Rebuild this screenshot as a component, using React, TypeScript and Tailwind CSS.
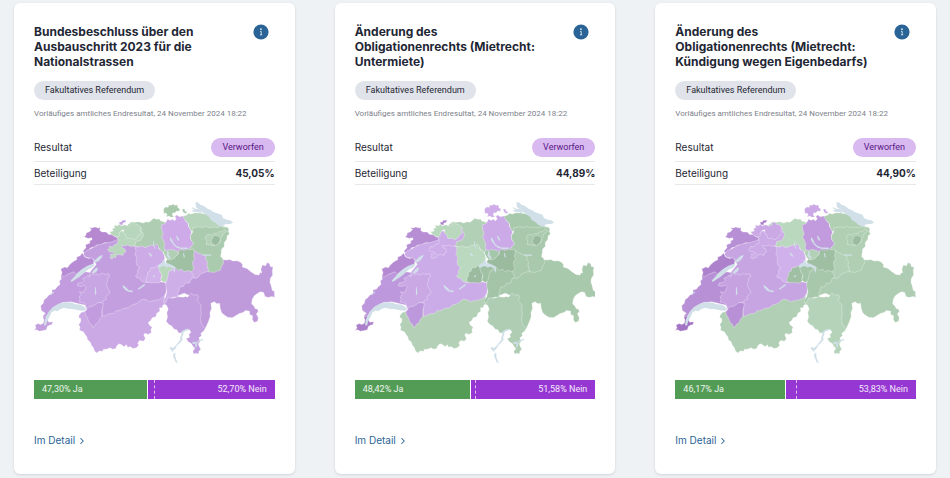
import React from 'react';
import { ChevronRight } from 'lucide-react';

type Canton =
  | 'VD' | 'GE' | 'VS' | 'BE' | 'FR' | 'NE' | 'JU' | 'BL' | 'SO' | 'BS' | 'AG' | 'LU' | 'ZG'
  | 'OW' | 'NW' | 'UR' | 'SZ' | 'GL' | 'ZH' | 'SH' | 'TG' | 'SG' | 'AR' | 'AI' | 'TI' | 'GR';

// Painted in this order: each shape may run on beneath the ones that follow it
const cantonShapes: [Canton, string][] = [
  ['GR', '455,304 460,270 495,235 540,205 590,186 597,194 608,195 616,193 626,198 638,197 648,201 655,208 654,216 668,220 680,230 692,238 704,240 708,232 712,234 710,222 714,210 724,212 728,202 736,206 738,214 746,216 744,228 745,240 738,250 737,262 740,270 744,286 750,288 751,306 742,304 732,307 722,304 718,292 708,290 698,296 690,302 684,312 682,326 690,334 692,340 700,342 702,350 696,356 702,368 700,378 690,382 684,374 685,362 676,358 676,348 664,346 656,352 645,355 634,362 624,368 610,366 598,358 592,352 588,340 586,324 578,326 570,320 560,324 562,340 557,352 558,364 553,378 546,394 543,400 520,392 515,310 480,294'],
  ['VS', '165,360 172,352 184,348 200,350 235,345 300,320 370,290 420,295 422,312 426,326 416,330 414,338 406,338 407,348 398,354 395,365 384,368 380,376 372,382 376,390 384,396 380,404 382,412 372,418 362,414 359,420 364,430 358,438 346,436 341,444 344,450 337,458 326,460 318,454 311,457 307,449 299,455 293,449 285,446 278,452 275,460 266,462 258,458 247,462 238,462 236,468 226,467 218,473 211,467 208,458 202,450 198,440 190,434 189,426 183,418 178,410 166,405 168,396 164,388 170,380 170,370 164,368'],
  ['VD', '110,242 130,236 150,228 160,228 200,232 210,320 238,316 240,330 234,345 233,364 226,372 222,382 214,388 207,398 202,388 194,380 190,368 184,358 182,350 188,343 184,330 165,326 140,320 115,322 92,334 78,350 70,368 58,372 57,362 64,354 52,346 50,332 58,324 60,314 68,308 74,300 84,294 84,284 94,282 100,274 108,268 106,258 112,252'],
  ['GE', '31,406 36,398 33,390 42,385 50,388 58,384 60,374 57,366 66,362 70,372 74,381 86,380 84,388 76,390 70,394 67,404 58,406 46,408 38,404'],
  ['BE', '178,178 182,170 190,164 200,161 212,154 222,148 236,145 252,142 280,130 345,135 350,190 345,225 350,250 375,256 425,262 428,276 425,294 418,306 404,314 390,316 376,320 366,314 354,312 344,320 336,326 322,330 312,338 298,340 288,346 276,347 268,355 254,356 244,362 235,363 234,345 238,325 210,318 195,290 190,255 200,228 216,208 208,192 192,188 184,186'],
  ['NE', '111,243 114,232 110,222 122,216 130,218 136,210 142,204 150,198 158,194 158,186 168,182 175,174 182,186 194,190 204,188 210,197 208,208 190,220 168,232 156,238 150,230 132,237 120,244'],
  ['FR', '202,238 206,234 210,240 216,236 224,240 236,234 240,238 255,236 256,246 250,250 250,260 246,266 249,276 254,284 258,293 250,300 245,304 248,312 238,316 236,321 222,322 214,328 204,334 196,334 190,339 184,334 183,326 174,322 165,320 168,312 165,304 172,298 166,290 178,292 182,284 186,276 180,270 172,274 160,272 162,264 174,262 180,256 176,250 186,246 192,240 196,246'],
  ['JU', '196,97 204,99 212,96 222,99 228,97 227,106 234,111 246,111 254,118 264,118 272,124 282,128 280,134 270,138 254,143 242,143 230,148 218,150 210,156 200,158 194,164 188,166 180,174 177,168 186,158 184,150 192,146 198,144 196,138 204,134 203,128 192,130 180,125 186,120 186,114 196,110 202,104'],
  ['AG', '310,90 322,80 334,82 344,80 356,84 366,80 374,82 382,76 388,70 398,73 406,72 410,78 425,82 425,172 414,172 408,164 395,152 370,158 345,156 325,152 320,130'],
  ['SO', '282,134 278,124 290,108 320,110 345,95 351,98 352,108 358,116 356,126 350,136 340,138 334,140 333,150 322,154 310,150 300,153 292,150 294,158 302,162 305,170 298,174 296,181 286,178 276,180 274,188 266,186 264,192 257,188 262,182 257,178 272,176 268,171 256,170 250,164 256,160 256,154 266,155 272,148 280,146'],
  ['BL', '260,116 257,110 268,108 264,102 272,98 270,90 280,92 286,88 292,92 302,89 312,93 320,90 320,84 330,82 334,88 344,90 350,98 347,106 352,114 344,120 338,128 330,134 322,130 308,130 304,118 297,114 300,104 292,106 284,116 286,122 278,126 268,122'],
  ['BS', '284,82 292,81 294,76 306,76 304,82 296,84 296,90 288,89'],
  ['ZH', '426,80 430,72 438,76 446,72 450,78 456,72 452,64 458,60 466,65 478,62 483,68 484,78 492,84 493,94 500,104 502,112 498,122 500,134 508,144 506,152 498,158 500,175 470,180 450,172 438,178 424,172 420,158 422,148 418,136 412,126 417,116 413,104 411,90 422,86'],
  ['TG', '476,64 488,60 492,55 502,57 512,53 526,54 540,56 552,60 562,68 575,80 588,90 612,98 600,104 515,110 500,108 494,94 492,84 484,78'],
  ['SG', '506,98 516,97 524,95 534,98 544,94 556,98 568,96 580,98 590,94 600,98 608,96 614,102 612,110 616,116 609,122 607,134 600,142 600,154 592,162 591,174 589,184 596,192 598,204 592,214 588,226 578,228 570,232 552,230 545,200 520,190 500,178 496,160 508,146 500,134 498,122 505,112'],
  ['AR', '546,121 554,118 562,121 568,116 578,115 584,110 592,110 598,104 607,106 603,112 596,116 594,124 588,130 588,142 578,148 568,152 556,149 546,148 548,138 543,130'],
  ['AI', '566,126 572,121 582,123 589,128 587,138 582,146 574,151 564,147 561,138'],
  ['GL', '503,170 512,168 522,174 532,178 546,184 543,192 550,200 548,210 551,220 553,228 540,232 530,236 524,244 516,250 504,248 499,253 490,246 495,225'],
  ['UR', '425,232 440,215 480,222 500,228 505,236 508,246 500,252 496,264 484,264 478,274 466,276 465,286 460,296 463,306 448,306 436,312 428,320 420,325 417,316 424,306 428,290 425,275'],
  ['SZ', '424,200 430,192 440,192 448,188 455,182 463,176 462,168 470,163 480,166 490,162 500,164 508,162 510,172 508,184 511,192 505,200 506,212 509,222 500,230 490,226 480,230 472,222 462,226 454,218 448,214 436,214'],
  ['LU', '332,154 344,156 352,152 362,157 372,154 382,150 388,152 396,147 402,152 404,162 414,168 420,180 422,192 418,200 408,216 388,222 376,238 372,262 362,262 352,258 348,250 338,248 334,242 341,236 340,226 346,218 338,210 336,200 338,186 332,178 336,168'],
  ['ZG', '418,174 422,164 430,166 440,163 454,166 461,170 462,178 454,184 450,190 440,194 430,193 424,186'],
  ['OW', '365,250 370,242 370,232 378,228 380,218 390,218 398,212 408,212 412,220 408,230 414,240 410,250 412,258 402,264 390,262 376,263 366,260'],
  ['NW', '402,214 418,208 430,210 442,216 444,226 434,228 432,240 430,246 428,258 420,262 412,258 410,252 414,242 408,232'],
  ['SH', '418,42 424,36 432,37 434,30 442,31 446,27 452,31 460,30 461,38 467,42 465,49 457,48 452,54 446,53 444,60 450,65 440,67 434,63 426,66 429,58 424,54 419,56'],
  ['SH', '474,42 482,42 482,48 488,50 487,56 480,54 476,50'],
  ['TI', '420,325 426,320 430,308 444,309 462,305 476,306 484,304 490,306 500,294 508,300 520,299 523,306 519,316 526,324 531,332 529,346 532,358 528,370 531,384 536,394 543,400 538,408 530,414 532,422 524,428 528,438 522,446 526,456 530,462 524,468 523,476 516,474 508,476 506,468 512,460 505,452 502,446 492,440 486,430 496,426 494,418 500,412 496,404 484,404 474,412 464,414 458,404 450,402 442,392 434,388 426,378 430,366 428,352 432,342 428,332'],
];

const lakePaths = [
  'M60 390l2-14 5-14 7-12 12-14 18-10 20-5 18 1 12 5 14 1 10 5 8 7-4 7-14-1-18-4-18-1-12-3-12 4-8 6-8-2-10 6-5 12-8 16-3 11z',
  'M140 256l10-10 10-12 14-12 16-10 14-5 8 2-8 9-12 5-12 11-14 12-10 6-8 6-7 2z',
  'M206 202l8-8 6-6 8-6 8-2-4 9-7 8-10 5z',
  'M203 233l6-8 8-8 5 4-5 9-8 5z',
  'M296 269l10 8 8 8 12 1-1 5-12-1-9-5-8-9z',
  'M341 281l9-7 8-6 6-1-4 6-8 5-8 6z',
  'M438 126l6 8 4 10 8 8 12 5 16 0 8 1-3 4-16 0-14-3-8-6-10-12-4-8z',
  'M455 121l5 3 5 10-2 4-5-6z',
  'M536 178l24 0 1 4-24 0z',
  'M428 168l6 3-1 8 6 8-3 6-6-7-4-6 3-4z',
  'M400 214l6-8 8-3 2-9 6 2 1 8 12 2 8 4 8 4 2 12-1 8-4-8-3-9-10-2-8 2-8-4-8 2-6 4z',
  'M372 172l7 3 6 8-4 2-5-5z',
  'M386 138l3 2 1 12 6 10-4-2-5-10z',
  'M386 244l6-4 2 2-6 5z',
  'M476 175l3-1 3 12-3 2z',
  'M514 22l6 0 10 8 8 2 12 9 10 4 8 6 10 4 14 4 4 10 12 5 10 2 9 7-10 4-14 1-10 6-12-3-10-9-12-8-4-8-12-8-10-8-10-8-8-6z',
  'M503 37l10 4 10 1 10 8-3 4-10-3-12-1-5-4 8-2-8-4z',
  'M484 402L492 400 492 405 482 408 477 412 478 418 474 424 475 434 468 442 458 452 453 462 447 466 446 472 454 474 453 482 456 492 461 504 454 500 450 490 446 482 449 474 440 464 436 459 440 455 446 459 454 452 462 442 468 434 468 426 472 418 470 412 476 406z',
  'M536 431l1 4-12 3-6 5-2 14-5-4 2-8-8 2-2-6 9-2 2 4 6-6z',
  'M78 298l11-9 1 3-10 8z',
  'M212 279l3-4 1 11 1 9-3 6-2-8 1-8z',
];

const lakeColor = '#d1dfe9';

type Vote = {
  id: string;
  title: string;
  turnout: string;
  yes: number;
  yesLabel: string;
  noLabel: string;
  fills: Record<Canton, string>;
};

const votes: Vote[] = [
  {
    id: 'nationalstrassen',
    title: 'Bundesbeschluss über den Ausbauschritt 2023 für die Nationalstrassen',
    turnout: '45,05%',
    yes: 47.3,
    yesLabel: '47,30% Ja',
    noLabel: '52,70% Nein',
    fills: {
      VD: '#c29cde', GE: '#c49fdf', VS: '#caa9e4', BE: '#c39fdf', FR: '#c8a5e3', NE: '#b78cd4', JU: '#b588d0',
      BL: '#b8d6bb', SO: '#b9d7bd', BS: '#c49fdf', AG: '#aecdb2', LU: '#cdabe7', ZG: '#b0cfb4', OW: '#d2b2ea',
      NW: '#b9d8bc', UR: '#cfafe8', SZ: '#9fc0a2', GL: '#ceade7', ZH: '#ceaae8', SH: '#a9c9ad', TG: '#b7d5ba',
      SG: '#abcbaf', AR: '#b2d1b6', AI: '#9bbd9f', TI: '#c3a0df', GR: '#c09bdc',
    },
  },
  {
    id: 'untermiete',
    title: 'Änderung des Obligationenrechts (Mietrecht: Untermiete)',
    turnout: '44,89%',
    yes: 48.42,
    yesLabel: '48,42% Ja',
    noLabel: '51,58% Nein',
    fills: {
      VD: '#be98dc', GE: '#ac7fcb', VS: '#b4d1b8', BE: '#ccace8', FR: '#c9a8e3', NE: '#b58ad2', JU: '#b78ed3',
      BL: '#b9d8bd', SO: '#ccade8', BS: '#ad80cc', AG: '#b2d0b6', LU: '#bad9be', ZG: '#a5c7aa', OW: '#9abb9e',
      NW: '#a0c1a4', UR: '#a3c4a7', SZ: '#9abb9e', GL: '#a9caad', ZH: '#ccaae8', SH: '#ceade9', TG: '#a9c9ad',
      SG: '#a9c9ad', AR: '#aacbae', AI: '#98b99c', TI: '#aecdb2', GR: '#a9c9ad',
    },
  },
  {
    id: 'eigenbedarf',
    title: 'Änderung des Obligationenrechts (Mietrecht: Kündigung wegen Eigenbedarfs)',
    turnout: '44,90%',
    yes: 46.17,
    yesLabel: '46,17% Ja',
    noLabel: '53,83% Nein',
    fills: {
      VD: '#b890d6', GE: '#a374c4', VS: '#b1cfb5', BE: '#c7a5e3', FR: '#c6a3e0', NE: '#ae81cc', JU: '#b78fd5',
      BL: '#cba9e5', SO: '#cbaae6', BS: '#a97ac8', AG: '#bad8be', LU: '#d0b1eb', ZG: '#b2d1b6', OW: '#9fc0a3',
      NW: '#a4c5a8', UR: '#a8c8ac', SZ: '#9fbfa3', GL: '#b1d0b5', ZH: '#c19bde', SH: '#cba8e6', TG: '#b0cfb3',
      SG: '#b0cfb3', AR: '#afceb2', AI: '#9bbc9f', TI: '#b5d3b9', GR: '#aecdb2',
    },
  },
];

function InfoIcon() {
  return (
    <svg viewBox="0 0 16 16" className="size-4" aria-hidden="true">
      <circle cx="8" cy="8" r="7.6" fill="#2a6496" />
      <circle cx="8" cy="5.2" r="0.9" fill="#dce8f2" />
      <path d="M7 7.4h1.2v3.4M7 10.8h2.2" stroke="#dce8f2" strokeWidth="0.9" fill="none" />
    </svg>
  );
}

function SwissMap({ fills }: { fills: Record<Canton, string> }) {
  return (
    <svg viewBox="30 0 721 525" className="block w-full" role="img" aria-label="Resultate nach Kanton">
      <g stroke="#ffffff" strokeOpacity="0.4" strokeWidth="2.2" strokeLinejoin="round">
        {cantonShapes.map(([canton, points]) => (
          <polygon key={points} points={points} fill={fills[canton]} />
        ))}
      </g>
      <g fill={lakeColor}>
        {lakePaths.map((d) => (
          <path key={d} d={d} />
        ))}
      </g>
    </svg>
  );
}

function ResultBar({ vote }: { vote: Vote }) {
  return (
    <div className="relative flex font-['Roboto',sans-serif] text-[9px] leading-[19px] text-white/90">
      <div className="border-r border-white bg-[#539c56] pl-2" style={{ width: `${vote.yes}%` }}>
        {vote.yesLabel}
      </div>
      <div className="flex-1 bg-[#9637d3] pr-2 text-right">{vote.noLabel}</div>
      {/* majority mark */}
      <div className="absolute inset-y-0 left-1/2 border-l border-dashed border-white/70" />
    </div>
  );
}

function VoteCard({ vote }: { vote: Vote }) {
  return (
    <article className="rounded-md bg-white px-5 pt-[21px] pb-6 shadow-sm">
      <div className="flex items-start justify-between pr-1.5">
        <h2 className="w-[196px] text-[12px] leading-[15px] font-bold">{vote.title}</h2>
        <button type="button" aria-label="Information" className="cursor-pointer">
          <InfoIcon />
        </button>
      </div>

      <div className="mt-3 flex">
        <span className="rounded-full bg-[#e0e3e9] px-[11px] font-['Roboto',sans-serif] text-[9px] leading-[19px]">
          Fakultatives Referendum
        </span>
      </div>
      <p className="mt-1.5 font-['Roboto',sans-serif] text-[8px] leading-4 text-[#7d818a]">
        Vorläufiges amtliches Endresultat, 24 November 2024 18:22
      </p>

      <dl className="mt-4 text-[10px]">
        <div className="flex h-6 items-start justify-between border-b border-[#e6e8ec]">
          <dt className="leading-[19px]">Resultat</dt>
          <dd className="rounded-full bg-[#d8b9f0] px-[11px] font-['Roboto',sans-serif] text-[9px] leading-[19px] text-[#571785]">
            Verworfen
          </dd>
        </div>
        <div className="flex h-[23px] items-center justify-between border-b border-[#e6e8ec]">
          <dt>Beteiligung</dt>
          <dd className="font-bold">{vote.turnout}</dd>
        </div>
      </dl>

      <div className="mt-2.5">
        <SwissMap fills={vote.fills} />
      </div>

      <div className="mt-2.5">
        <ResultBar vote={vote} />
      </div>

      <a href={`#${vote.id}`} className="mt-8 flex items-center gap-0.5 text-[10px] leading-[19px] text-[#2a6496]">
        Im Detail
        <ChevronRight className="size-2.5" strokeWidth={2.5} />
      </a>
    </article>
  );
}

export default function App() {
  return (
    <main className="min-h-screen bg-[#eef2f5] px-3.5 pt-[3px] font-['Inter',sans-serif] text-[#1f2735]">
      <div className="grid grid-cols-3 gap-10">
        {votes.map((vote) => (
          <VoteCard key={vote.id} vote={vote} />
        ))}
      </div>
    </main>
  );
}
